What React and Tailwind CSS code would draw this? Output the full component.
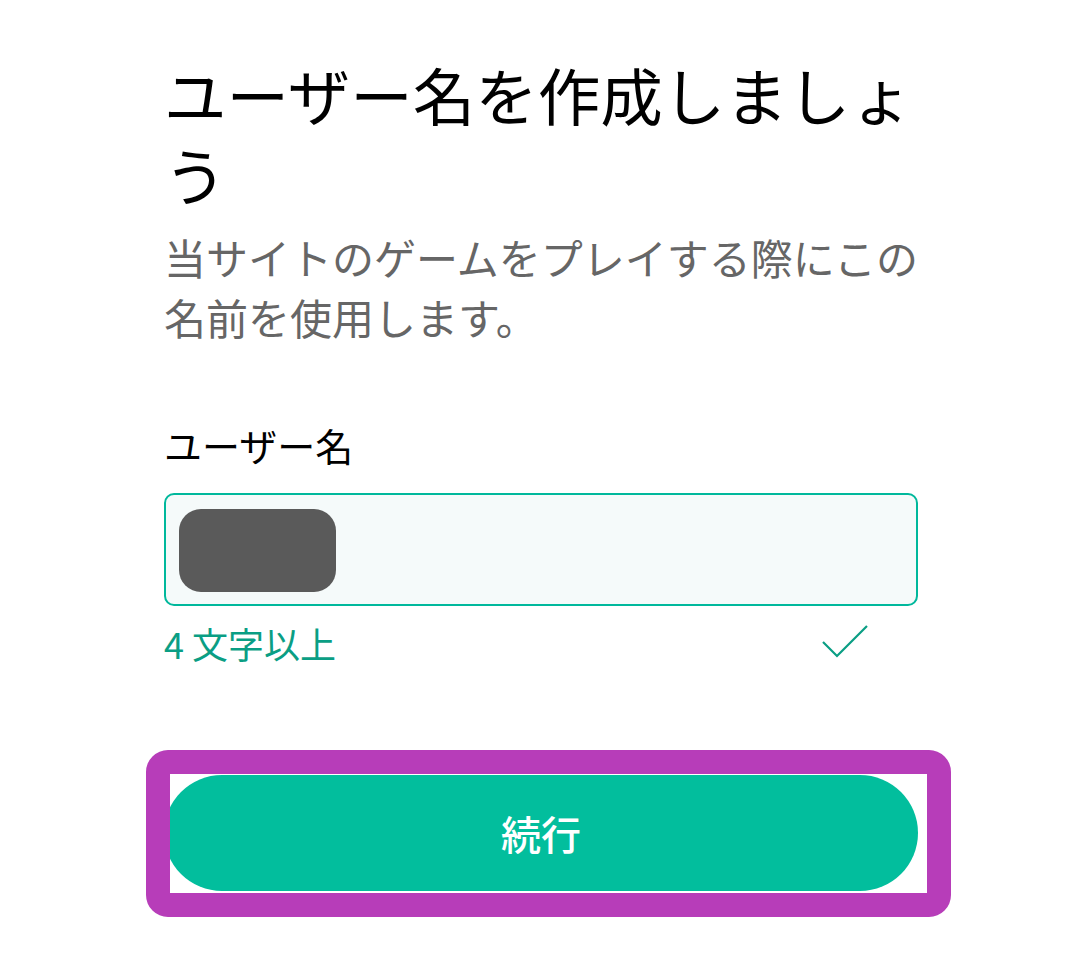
export default function App() {
  return (
    <div
      className="min-h-screen bg-white"
      style={{ fontFamily: '"Noto Sans CJK JP", "Noto Sans", sans-serif' }}
    >
      <div className="w-[754px] ml-[164px] pt-[54px] pb-[48px]">
        <h1 className="text-[62.5px] leading-[80px] text-black font-normal">
          ユーザー名を作成しましょう
        </h1>
        <p className="mt-[13px] text-[42px] leading-[60px] text-[#666666]">
          当サイトのゲームをプレイする際にこの名前を使用します。
        </p>

        <label className="block mt-[74px] text-[38px] leading-[48px] text-black">
          ユーザー名
        </label>
        <div className="mt-[24px] h-[113px] rounded-[10px] border-2 border-[#00b89c] bg-[#f5fafa] pl-[13px] pt-[14px]">
          <div className="w-[157px] h-[83px] rounded-[22px] bg-[#5a5a5a]" />
        </div>

        <div className="mt-[13px] flex items-center justify-between pr-[48px]">
          <span className="text-[36px] leading-[48px] text-[#0a9e84]">4 文字以上</span>
          <svg width="48" height="36" viewBox="0 0 48 36" fill="none">
            <path d="M1 17 L15 31 L45 1" stroke="#0a9e84" strokeWidth="2.2" />
          </svg>
        </div>

        <div className="relative mt-[108px]">
          <button className="w-full h-[116px] rounded-full bg-[#02be9d] text-white text-[40px] font-medium">
            続行
          </button>
          <div className="absolute -left-[18px] -top-[25px] -right-[33px] -bottom-[26px] rounded-[22px] border-[24px] border-[#b73db9] pointer-events-none" />
        </div>
      </div>
    </div>
  )
}
